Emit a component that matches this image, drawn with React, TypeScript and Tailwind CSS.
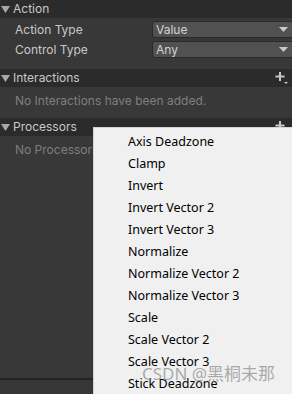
import React from "react";

const items = [
  "Axis Deadzone",
  "Clamp",
  "Invert",
  "Invert Vector 2",
  "Invert Vector 3",
  "Normalize",
  "Normalize Vector 2",
  "Normalize Vector 3",
  "Scale",
  "Scale Vector 2",
  "Scale Vector 3",
  "Stick Deadzone",
];

const Fold = () => (
  <svg width="9" height="8" viewBox="0 0 9 8" className="mr-[3px] ml-[1px]">
    <path d="M0 1 L9 1 L4.5 8 Z" fill="#a8a8a8" />
  </svg>
);

const PlusMenu = () => (
  <svg width="14" height="14" viewBox="0 0 14 14">
    <path d="M5 1 V10 M0.5 5.5 H9.5" stroke="#c8c8c8" strokeWidth="2" />
    <path d="M9 11 L13 11 L11 13 Z" fill="#c8c8c8" />
  </svg>
);

const Header = ({ title, plus }: { title: string; plus?: boolean }) => (
  <div className="flex items-center h-[18px] bg-[#2b2b2b] text-[#c8c8c8] pr-[3px]">
    <Fold />
    <span className="flex-1 leading-none">{title}</span>
    {plus && <PlusMenu />}
  </div>
);

const Dropdown = ({ value }: { value: string }) => (
  <div className="flex shrink-0 items-center h-[17px] w-[144px] rounded-[3px] border border-[#2a2a2a] bg-[#515151] pl-[3px] pr-[7px] text-[#d2d2d2]">
    <span className="flex-1 leading-none">{value}</span>
    <svg width="9" height="6" viewBox="0 0 9 6">
      <path d="M0 0 L9 0 L4.5 5 Z" fill="#c8c8c8" />
    </svg>
  </div>
);

const Row = ({ label, value }: { label: string; value: string }) => (
  <div className="flex items-center h-[17px]">
    <span className="w-[152px] shrink-0 pl-[15px] text-[#c8c8c8]">{label}</span>
    <Dropdown value={value} />
  </div>
);

export default function App() {
  return (
    <div
      className="relative w-[292px] h-[394px] overflow-hidden bg-[#383838] text-[12px]"
      style={{ fontFamily: "Inter, 'Noto Sans', sans-serif" }}
    >
      <Header title="Action" />
      <div className="flex flex-col gap-[3px] pt-[3px] h-[51px]">
        <Row label="Action Type" value="Value" />
        <Row label="Control Type" value="Any" />
      </div>
      <Header title="Interactions" plus />
      <div className="h-[31px] pl-[15px] pt-[5px] text-[#7f7f7f]">
        No Interactions have been added.
      </div>
      <Header title="Processors" plus />
      <div className="h-[242px] pl-[15px] pt-[5px] text-[#7f7f7f]">
        No Processors have been added.
      </div>
      <div className="h-[2px] bg-[#232323]" />
      <div className="h-[20px] bg-[#363636]" />

      <div
        className="absolute left-[93px] top-[127px] right-0 bottom-0 bg-[#f0f0f0] border-l border-t border-[#d4d4d4] pt-[3px] text-black text-[12.5px]"
        style={{ fontFamily: "'Noto Sans', 'Liberation Sans', sans-serif" }}
      >
        {items.map((it) => (
          <div key={it} className="h-[22px] leading-[22px] pl-[34px]">
            {it}
          </div>
        ))}
      </div>

      <div
        className="absolute left-[142px] top-[365px] text-[17px] leading-none text-[#8a8a8a]/70"
        style={{ fontFamily: "'Noto Sans', 'Noto Sans CJK SC', sans-serif" }}
      >
        CSDN @黑桐未那
      </div>
    </div>
  );
}
